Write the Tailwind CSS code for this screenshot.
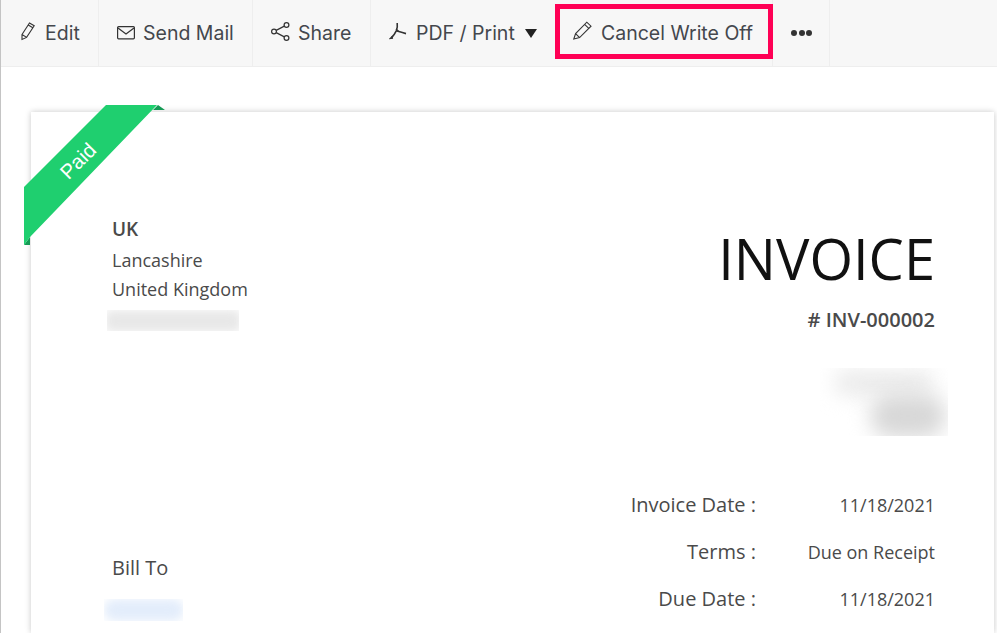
<!DOCTYPE html>
<html lang="en">
<head>
  <meta charset="UTF-8" />
  <title>Invoice</title>
  <script src="https://cdn.jsdelivr.net/npm/@tailwindcss/browser@4"></script>
</head>
<body class="flex flex-col h-[633px] overflow-hidden bg-white border-l border-[#c4c4c4] font-['Open_Sans',sans-serif] text-[#4a4a4a]">
  <!-- toolbar -->
  <div class="flex shrink-0 h-[67px] bg-[#f7f7f7] border-b border-[#eeeeee] font-['Inter',sans-serif] text-[19.5px] text-[#44474d]">
    <div class="flex items-center gap-[7px] w-[98px] pl-[19px] border-r border-[#eeeeee]">
      <svg class="w-[18px] h-[20px] -mt-[4px]" viewBox="0 0 18 20" fill="none" stroke="#333" stroke-width="1.1"><path d="M2 13.5 L9.5 2 L14.2 4.8 L6.6 16.4 L2 18.4 Z M8.2 4 L12.9 6.8 M2 13.5 L6.6 16.4"/></svg>
      <span class="mt-[1px]">Edit</span>
    </div>
    <div class="flex items-center gap-[8px] w-[154px] pl-[18px] border-r border-[#eeeeee]">
      <svg class="w-[18px] h-[14px]" viewBox="0 0 18 14" fill="none" stroke="#333" stroke-width="1.2"><rect x="0.6" y="0.6" width="16.8" height="12.2" rx="1"/><path d="M1 2 L9 8 L17 2"/></svg>
      <span class="mt-[1px]">Send Mail</span>
    </div>
    <div class="flex items-center gap-[8px] w-[118px] pl-[18px] border-r border-[#eeeeee]">
      <svg class="w-[19px] h-[19px] -mt-[4px]" viewBox="0 0 19 19" fill="none" stroke="#333" stroke-width="1.2"><circle cx="3" cy="9.5" r="2.4"/><circle cx="15.5" cy="3" r="2.4"/><circle cx="15.5" cy="16" r="2.4"/><path d="M5.2 8.4 L13.3 4.1 M5.2 10.6 L13.3 14.9"/></svg>
      <span class="mt-[1px]">Share</span>
    </div>
    <div class="flex items-center gap-[9px] w-[184px] pl-[18px]">
      <svg class="w-[18px] h-[18px] -mt-[5px]" viewBox="0 0 18 18" fill="none" stroke="#333"><path d="M8.2 1 C8.6 4 8.4 6 7.4 8.6 C6 11.6 4.4 13.6 2.6 15.6" stroke-width="1.6"/><path d="M7.4 8.8 C10 9.6 13 10.6 17 11.6" stroke-width="1.6"/><path d="M1 16.6 L3 14.6 L3.4 16.2 Z M7 7 L10 9.6" stroke-width="1.2"/></svg>
      <span class="whitespace-nowrap mt-[1px]">PDF / Print</span>
      <span class="w-0 h-0 ml-[1px] border-x-[6px] border-x-transparent border-t-[9px] border-t-[#222]"></span>
    </div>
    <div class="relative flex items-center gap-[9px] w-[218px] pl-[18px] border-r border-[#eeeeee]">
      <div class="absolute left-0 top-[4px] w-[218px] h-[55px] border-[5px] border-[#ff0055]"></div>
      <svg class="w-[19px] h-[19px] -mt-[5px]" viewBox="0 0 19 19" fill="none" stroke="#333" stroke-width="1.1"><path d="M0.8 18 L2.6 12.6 L13.8 1.2 L18 5.2 L6.6 16.6 Z M11.6 3.4 L15.8 7.4 M2.6 12.6 L6.6 16.6"/></svg>
      <span class="whitespace-nowrap mt-[1px]">Cancel Write Off</span>
    </div>
    <div class="flex items-center gap-[1.5px] w-[57px] pl-[18px] border-r border-[#eeeeee]">
      <span class="w-[6px] h-[6px] rounded-full bg-[#333]"></span>
      <span class="w-[6px] h-[6px] rounded-full bg-[#333]"></span>
      <span class="w-[6px] h-[6px] rounded-full bg-[#333]"></span>
    </div>
  </div>

  <!-- invoice sheet, cut off by the window like the screenshot -->
  <div class="flex-1 overflow-hidden pt-[45px] pl-[30px] pr-[3px]">
    <div class="relative h-[521px] bg-white shadow-[0_0_6px_rgba(0,0,0,0.22)]">
      <!-- ribbon -->
      <svg class="absolute left-[-7px] top-[-7px] w-[150px] h-[150px]" viewBox="0 0 150 150">
        <path d="M129 5 L134 0 L141 5 Z M6 132 L0 140 L6 140 Z" fill="#159a55"/>
        <path d="M82 0 L133 0 L6 132 L0 140 L0 82 Z" fill="#1fcf6f"/>
      </svg>
      <div class="absolute left-[27px] top-[39px] w-[40px] -rotate-45 flex justify-center text-white text-[20.5px] leading-[20px] font-['Liberation_Sans',sans-serif]">Paid</div>

      <div class="grid grid-cols-[1fr_auto] pl-[81px] pr-[59px]">
        <!-- left column -->
        <div class="pt-[102px] text-[18px]">
          <div class="font-semibold text-[19px] leading-[30px]">UK</div>
          <div class="leading-[30px] mt-[1px]">Lancashire</div>
          <div class="leading-[29px]">United Kingdom</div>
          <div class="relative -left-[5px] w-[132px] h-[21px] overflow-hidden mt-[6px]">
            <div class="w-[136px] h-[22px] ml-[-2px] rounded-[6px] bg-[#e8e8e8] blur-[5px]"></div>
          </div>
          <div class="mt-[222px] text-[20px] leading-[30px]">Bill To</div>
          <div class="relative -left-[8px] mt-[16px] w-[79px] h-[22px] overflow-hidden">
            <div class="w-[80px] h-[22px] rounded-full bg-[#e3edfb] blur-[5px]"></div>
          </div>
        </div>
        <!-- right column -->
        <div class="flex flex-col items-end pt-[109px]">
          <div class="text-[56px] leading-[78px] text-[#111] -mt-[2px]">INVOICE</div>
          <div class="mt-[8px] text-[20px] leading-[30px] font-semibold"># INV-000002</div>
          <div class="relative left-[13px] mt-[33px] w-[128px] h-[68px] overflow-hidden">
            <div class="absolute left-[14px] top-[2px] w-[100px] h-[26px] rounded-full bg-[#ebebeb] blur-[10px]"></div>
            <div class="absolute left-[50px] top-[26px] w-[76px] h-[44px] rounded-full bg-[#d8d8d8] blur-[10px]"></div>
          </div>
          <div class="mt-[54px] grid grid-cols-[auto_179px] gap-y-[17px] text-right leading-[30px]">
            <div class="text-[20px]">Invoice Date :</div><div class="text-[18px]">11/18/2021</div>
            <div class="text-[20px]">Terms :</div><div class="text-[18px]">Due on Receipt</div>
            <div class="text-[20px]">Due Date :</div><div class="text-[18px]">11/18/2021</div>
          </div>
        </div>
      </div>
    </div>
  </div>
</body>
</html>
